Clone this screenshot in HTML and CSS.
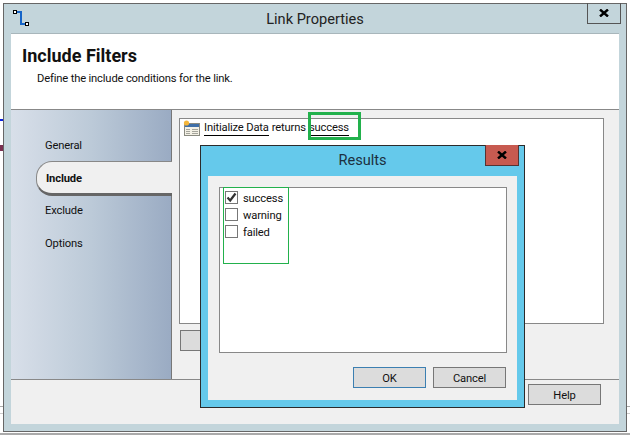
FILE: index.html
```html
<!DOCTYPE html>
<html lang="en">
<head>
    <meta charset="UTF-8">
    <meta name="viewport" content="width=device-width, initial-scale=1.0">
    <title>Link Properties</title>
    <link rel="stylesheet" href="styles.css">
</head>
<body>
    <div class="behind-blue"></div>
    <div class="behind-red"></div>
    <div class="behind-lines"></div>
    <div class="behind-bottom"></div>

    <div class="window">
        <div class="titlebar">
            <svg class="link-icon" width="17" height="17" viewBox="0 0 17 17">
                <path d="M5 2H9V14H14" fill="none" stroke="#1464c8" stroke-width="2"/>
                <rect x="1.5" y="0.5" width="3" height="3" fill="#fff" stroke="#000"/>
                <rect x="13.5" y="12.5" width="3" height="3" fill="#fff" stroke="#000"/>
            </svg>
            <span class="window-title">Link Properties</span>
            <button class="close-button">
                <svg width="10" height="8" viewBox="0 0 10 8"><path d="M1 0.5L9 7.5M9 0.5L1 7.5" stroke="#000" stroke-width="2.4"/></svg>
            </button>
        </div>

        <div class="inner">
            <div class="header">
                <h1>Include Filters</h1>
                <p>Define the include conditions for the link.</p>
            </div>

            <div class="main">
                <div class="sidebar">
                    <div class="tab">General</div>
                    <div class="tab active">Include</div>
                    <div class="tab">Exclude</div>
                    <div class="tab">Options</div>
                </div>
                <div class="content">
                    <div class="rule-box">
                        <svg class="table-icon" width="17" height="16" viewBox="0 0 17 16">
                            <rect x="1.5" y="3.5" width="15" height="12" fill="#f4f1e6" stroke="#8a8a80"/>
                            <rect x="2" y="4" width="14" height="3" fill="#3f6fa8"/>
                            <path d="M3 9.5H7M9 9.5H15M3 11.5H7M9 11.5H15M3 13.5H7M9 13.5H15" stroke="#a5a59c"/>
                            <circle cx="3.5" cy="3" r="2.6" fill="#f5b63a"/>
                        </svg>
                        <span class="rule-link">Initialize Data</span>
                        <span>returns</span>
                        <span class="rule-link">success</span>
                    </div>
                    <div class="content-actions">
                        <button class="btn add-button"></button>
                    </div>
                </div>
            </div>

            <div class="footer">
                <button class="btn">Help</button>
            </div>
        </div>
    </div>

    <div class="mark-rule"></div>

    <div class="dialog">
        <div class="dialog-title">
            <span>Results</span>
            <button class="close-button close-red">
                <svg width="10" height="8" viewBox="0 0 10 8"><path d="M1 0.5L9 7.5M9 0.5L1 7.5" stroke="#000" stroke-width="2.4"/></svg>
            </button>
        </div>
        <div class="dialog-body">
            <div class="check-list">
                <label class="check-row">
                    <span class="check-box">
                        <svg width="11" height="11" viewBox="0 0 11 11"><path d="M1.5 5.5L4.2 8.5L9.5 1.5" fill="none" stroke="#333" stroke-width="2.2"/></svg>
                    </span>
                    success
                </label>
                <label class="check-row"><span class="check-box"></span>warning</label>
                <label class="check-row"><span class="check-box"></span>failed</label>
            </div>
            <div class="dialog-actions">
                <button class="btn btn-default">OK</button>
                <button class="btn">Cancel</button>
            </div>
        </div>
    </div>

    <div class="mark-checks"></div>
</body>
</html>
```

FILE: styles.css
```css
html, body {
    margin: 0;
    height: 435px;
    overflow: hidden;
}
body {
    position: relative;
    background-color: white;
    font-family: Roboto, sans-serif;
    font-size: 11.2px;
    letter-spacing: -0.16px;
    color: #111;
}
button {
    font-family: inherit;
    font-size: inherit;
    letter-spacing: inherit;
    color: inherit;
    padding: 0;
    cursor: pointer;
}

/* bits of other windows showing at the edges */
.behind-blue {
    position: absolute;
    left: 0;
    top: 119px;
    width: 3px;
    height: 2px;
    background-color: #0a20e0;
}
.behind-red {
    position: absolute;
    left: 0;
    top: 145px;
    width: 3px;
    height: 6px;
    background-color: #7a3050;
}
.behind-lines {
    position: absolute;
    left: 0;
    right: 0;
    top: 406px;
    height: 6px;
    border-top: 1px solid #aaa;
    border-bottom: 1px solid #ccc;
}
.behind-bottom {
    position: absolute;
    left: 0;
    right: 0;
    top: 433px;
    height: 2px;
    background-color: #aaa;
}

.window {
    position: relative;
    box-sizing: border-box;
    width: 624px;
    height: 429px;
    margin: 3px 0 0 3px;
    padding: 0 7px 7px 7px;
    display: flex;
    flex-direction: column;
    background-color: #c3d5db;
    border: 1px solid #666;
}
.titlebar {
    height: 29px;
    flex: none;
    display: flex;
    align-items: center;
    justify-content: center;
}
.link-icon {
    position: absolute;
    left: 8px;
    top: 6px;
}
.window-title {
    font-size: 14.6px;
    letter-spacing: 0;
    color: #222;
}
.close-button {
    position: absolute;
    top: -1px;
    right: 5px;
    box-sizing: border-box;
    width: 34px;
    height: 21px;
    display: flex;
    align-items: center;
    justify-content: center;
    background-color: transparent;
    border: 1px solid #555;
    border-top: none;
}
.inner {
    flex: 1;
    display: flex;
    flex-direction: column;
    border-top: 1px solid #a8b6bb;
    background-color: #f0f0f0;
}
.header {
    height: 76px;
    flex: none;
    box-sizing: border-box;
    padding: 11px 11px 0;
    background-color: white;
    border-bottom: 1px solid #888;
}
h1 {
    margin: 0;
    font-size: 18px;
    letter-spacing: 0;
    line-height: 21px;
    font-weight: bold;
}
p {
    margin: 5px 0 0 15px;
    line-height: 16px;
}
.main {
    flex: 1;
    display: flex;
    border-bottom: 1px solid #888;
}
.sidebar {
    width: 161px;
    flex: none;
    box-sizing: border-box;
    padding-top: 19px;
    background: linear-gradient(to right, #d8dfe9, #bccad8 50%, #9aabc3);
    border-right: 1px solid #777;
}
.tab {
    height: 33px;
    padding-left: 34px;
    line-height: 33px;
}
.tab.active {
    position: relative;
    box-sizing: border-box;
    height: 35px;
    margin: -1px -1px -2px 25px;
    padding-left: 9px;
    line-height: 34px;
    font-weight: bold;
    background-color: #f0f0f0;
    border: 1px solid #888;
    border-right: none;
    border-bottom: 3px solid #666;
    border-radius: 16px 0 0 16px;
}
.content {
    flex: 1;
    box-sizing: border-box;
    padding: 8px 15px 0 7px;
}
.rule-box {
    box-sizing: border-box;
    height: 206px;
    padding: 1px 3px 0;
    display: flex;
    align-items: flex-start;
    gap: 3px;
    line-height: 15px;
    background-color: white;
    border: 1px solid #888;
}
.table-icon {
    margin-right: 1px;
}
.rule-link {
    border-bottom: 1px solid #000;
}
.content-actions {
    margin: 6px 0 0 1px;
}
.btn {
    box-sizing: border-box;
    width: 73px;
    height: 21px;
    padding-top: 1px;
    background-color: #dcdcdc;
    border: 1px solid #777;
}
.footer {
    height: 44px;
    flex: none;
    box-sizing: border-box;
    padding: 4px 18px 0 0;
    display: flex;
    justify-content: flex-end;
}

.dialog {
    position: absolute;
    left: 200px;
    top: 145px;
    box-sizing: border-box;
    width: 325px;
    height: 263px;
    padding: 0 7px 7px;
    display: flex;
    flex-direction: column;
    background-color: #65c9eb;
    border: 1px solid #2b2b2b;
}
.dialog-title {
    height: 30px;
    flex: none;
    display: flex;
    align-items: center;
    justify-content: center;
    padding-bottom: 2px;
    box-sizing: border-box;
    font-size: 14.6px;
    letter-spacing: 0;
    color: #1c3040;
}
.close-red {
    top: -1px;
    right: 5px;
    background-color: #c75a50;
    border-color: #553333;
}
.dialog-body {
    flex: 1;
    display: flex;
    flex-direction: column;
    padding: 11px 10px 12px 11px;
    background-color: #f0f0f0;
}
.check-list {
    flex: 1;
    box-sizing: border-box;
    padding: 1px 5px;
    background-color: white;
    border: 1px solid #888;
}
.check-row {
    display: flex;
    align-items: flex-start;
    gap: 5px;
    height: 17px;
    line-height: 19px;
}
.check-box {
    box-sizing: border-box;
    width: 13px;
    height: 13px;
    margin-top: 2px;
    display: flex;
    align-items: center;
    justify-content: center;
    background-color: white;
    border: 1px solid #777;
}
.dialog-actions {
    flex: none;
    display: flex;
    justify-content: flex-end;
    gap: 7px;
    margin-top: 14px;
    padding-right: 1px;
}
.btn-default {
    border-color: #3c7fb1;
}

/* green annotations drawn on top of the screenshot */
.mark-rule {
    position: absolute;
    left: 308px;
    top: 112px;
    box-sizing: border-box;
    width: 53px;
    height: 28px;
    border: 3px solid #22b14c;
}
.mark-checks {
    position: absolute;
    left: 223px;
    top: 187px;
    box-sizing: border-box;
    width: 66px;
    height: 77px;
    border: 1px solid #22b14c;
}
```
